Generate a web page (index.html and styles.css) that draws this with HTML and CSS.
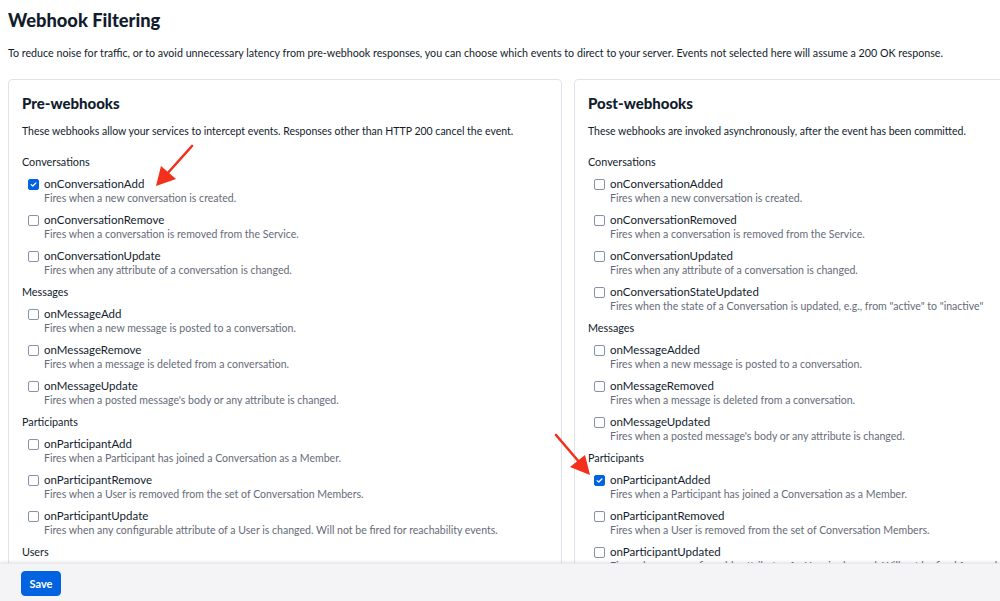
FILE: index.html
```html
<!DOCTYPE html>
<html>
<head>
<meta charset="utf-8">
<link rel="stylesheet" href="styles.css">
</head>
<body>
<div class="page">
  <h1 class="title">Webhook Filtering</h1>
  <p class="intro">To reduce noise for traffic, or to avoid unnecessary latency from pre-webhook responses, you can choose which events to direct to your server. Events not selected here will assume a 200 OK response.</p>
  <div class="cards">
    <section class="card">
      <h2 class="card-title">Pre-webhooks</h2>
      <p class="card-desc">These webhooks allow your services to intercept events. Responses other than HTTP 200 cancel the event.</p>
      <div class="group">
        <div class="group-label">Conversations</div>
        <div class="item"><span class="box checked"><svg viewBox="0 0 11 11"><path d="M2.6 5.6 L4.6 7.4 L8.4 3.6" fill="none" stroke="#fff" stroke-width="1.5" stroke-linecap="round" stroke-linejoin="round"/></svg></span><div class="text"><div class="name">onConversationAdd</div><div class="desc">Fires when a new conversation is created.</div></div></div>
        <div class="item"><span class="box"></span><div class="text"><div class="name">onConversationRemove</div><div class="desc">Fires when a conversation is removed from the Service.</div></div></div>
        <div class="item"><span class="box"></span><div class="text"><div class="name">onConversationUpdate</div><div class="desc">Fires when any attribute of a conversation is changed.</div></div></div>
      </div>
      <div class="group">
        <div class="group-label">Messages</div>
        <div class="item"><span class="box"></span><div class="text"><div class="name">onMessageAdd</div><div class="desc">Fires when a new message is posted to a conversation.</div></div></div>
        <div class="item"><span class="box"></span><div class="text"><div class="name">onMessageRemove</div><div class="desc">Fires when a message is deleted from a conversation.</div></div></div>
        <div class="item"><span class="box"></span><div class="text"><div class="name">onMessageUpdate</div><div class="desc">Fires when a posted message's body or any attribute is changed.</div></div></div>
      </div>
      <div class="group">
        <div class="group-label">Participants</div>
        <div class="item"><span class="box"></span><div class="text"><div class="name">onParticipantAdd</div><div class="desc">Fires when a Participant has joined a Conversation as a Member.</div></div></div>
        <div class="item"><span class="box"></span><div class="text"><div class="name">onParticipantRemove</div><div class="desc">Fires when a User is removed from the set of Conversation Members.</div></div></div>
        <div class="item"><span class="box"></span><div class="text"><div class="name">onParticipantUpdate</div><div class="desc">Fires when any configurable attribute of a User is changed. Will not be fired for reachability events.</div></div></div>
      </div>
      <div class="group">
        <div class="group-label">Users</div>
        <div class="item"><span class="box"></span><div class="text"><div class="name">onUserUpdate</div><div class="desc">Fires when any attribute of a User is changed.</div></div></div>
      </div>
    </section>
    <section class="card">
      <h2 class="card-title">Post-webhooks</h2>
      <p class="card-desc">These webhooks are invoked asynchronously, after the event has been committed.</p>
      <div class="group">
        <div class="group-label">Conversations</div>
        <div class="item"><span class="box"></span><div class="text"><div class="name">onConversationAdded</div><div class="desc">Fires when a new conversation is created.</div></div></div>
        <div class="item"><span class="box"></span><div class="text"><div class="name">onConversationRemoved</div><div class="desc">Fires when a conversation is removed from the Service.</div></div></div>
        <div class="item"><span class="box"></span><div class="text"><div class="name">onConversationUpdated</div><div class="desc">Fires when any attribute of a conversation is changed.</div></div></div>
        <div class="item"><span class="box"></span><div class="text"><div class="name">onConversationStateUpdated</div><div class="desc">Fires when the state of a Conversation is updated, e.g., from "active" to "inactive"</div></div></div>
      </div>
      <div class="group">
        <div class="group-label">Messages</div>
        <div class="item"><span class="box"></span><div class="text"><div class="name">onMessageAdded</div><div class="desc">Fires when a new message is posted to a conversation.</div></div></div>
        <div class="item"><span class="box"></span><div class="text"><div class="name">onMessageRemoved</div><div class="desc">Fires when a message is deleted from a conversation.</div></div></div>
        <div class="item"><span class="box"></span><div class="text"><div class="name">onMessageUpdated</div><div class="desc">Fires when a posted message's body or any attribute is changed.</div></div></div>
      </div>
      <div class="group">
        <div class="group-label">Participants</div>
        <div class="item"><span class="box checked"><svg viewBox="0 0 11 11"><path d="M2.6 5.6 L4.6 7.4 L8.4 3.6" fill="none" stroke="#fff" stroke-width="1.5" stroke-linecap="round" stroke-linejoin="round"/></svg></span><div class="text"><div class="name">onParticipantAdded</div><div class="desc">Fires when a Participant has joined a Conversation as a Member.</div></div></div>
        <div class="item"><span class="box"></span><div class="text"><div class="name">onParticipantRemoved</div><div class="desc">Fires when a User is removed from the set of Conversation Members.</div></div></div>
        <div class="item"><span class="box"></span><div class="text"><div class="name">onParticipantUpdated</div><div class="desc">Fires when any configurable attribute of a User is changed. Will not be fired for reachability events.</div></div></div>
      </div>
    </section>
  </div>
</div>

<svg class="arrow arrow-left" width="50" height="50" viewBox="0 0 50 50">
  <line x1="42" y1="4" x2="16" y2="33" stroke="#f2301b" stroke-width="2.6" stroke-linecap="round"/>
  <polygon points="6,44 11,24 26,37" fill="#f2301b"/>
</svg>
<svg class="arrow arrow-right" width="50" height="50" viewBox="0 0 50 50">
  <line x1="6" y1="4" x2="30" y2="32" stroke="#f2301b" stroke-width="2.6" stroke-linecap="round"/>
  <polygon points="40,44 20,36 35,24" fill="#f2301b"/>
</svg>

<footer class="footer">
  <button class="save">Save</button>
</footer>
</body>
</html>
```

FILE: styles.css
```css
html, body {
  margin: 0;
  padding: 0;
  background: #ffffff;
  overflow: hidden;
}
body {
  font-family: Lato, "Liberation Sans", sans-serif;
  color: #121c2d;
  width: 1000px;
  height: 601px;
  position: relative;
}
.page {
  padding: 8px 0 0 8px;
  width: 1200px;
}
.title {
  margin: 0;
  font-size: 18.3px;
  line-height: 24px;
  font-weight: 900;
  color: #121c2d;
}
.intro {
  margin: 14px 0 0 0;
  font-size: 10.7px;
  line-height: 14px;
  color: #121c2d;
}
.cards {
  margin-top: 19px;
  display: grid;
  grid-template-columns: 554px 554px;
  column-gap: 12px;
  align-items: start;
}
.card {
  border: 1px solid #e1e3ea;
  border-radius: 4px;
  padding: 13px 13px 20px 13px;
}
.card-title {
  margin: 0;
  font-size: 15px;
  line-height: 20px;
  font-weight: 900;
}
.card-desc {
  margin: 11px 0 17px 0;
  font-size: 10.5px;
  line-height: 14px;
}
.group-label {
  font-size: 10.8px;
  line-height: 14px;
  margin-bottom: 8px;
}
.item {
  display: flex;
  align-items: flex-start;
  padding-left: 6px;
  margin-bottom: 8px;
}
.box {
  flex: none;
  width: 9px;
  height: 9px;
  margin-top: 2px;
  margin-right: 5px;
  border: 1px solid #8891aa;
  border-radius: 2px;
  background: #fff;
  display: flex;
}
.box.checked {
  background: #0263e0;
  border-color: #0263e0;
}
.box svg {
  width: 9px;
  height: 9px;
}
.name {
  font-size: 11.5px;
  line-height: 14px;
  letter-spacing: 0;
  color: #121c2d;
  white-space: nowrap;
}
.desc {
  font-size: 10.55px;
  line-height: 14px;
  color: #666b78;
  white-space: nowrap;
}
.arrow {
  position: absolute;
}
.arrow-left {
  left: 150px;
  top: 142px;
}
.arrow-right {
  left: 550px;
  top: 431px;
}
.footer {
  position: absolute;
  left: 0;
  right: 0;
  bottom: 0;
  height: 38px;
  background: #f4f4f6;
  box-shadow: 0 -1px 3px rgba(18, 28, 45, 0.12);
  border-top: 1px solid #e8e9ee;
  padding: 7px 0 0 21px;
  box-sizing: border-box;
}
.save {
  font-family: Lato, "Liberation Sans", sans-serif;
  font-size: 11px;
  font-weight: 700;
  color: #ffffff;
  background: #0263e0;
  border: 1px solid #0263e0;
  border-radius: 4px;
  width: 40px;
  height: 25px;
  padding: 0;
  cursor: pointer;
}
```
